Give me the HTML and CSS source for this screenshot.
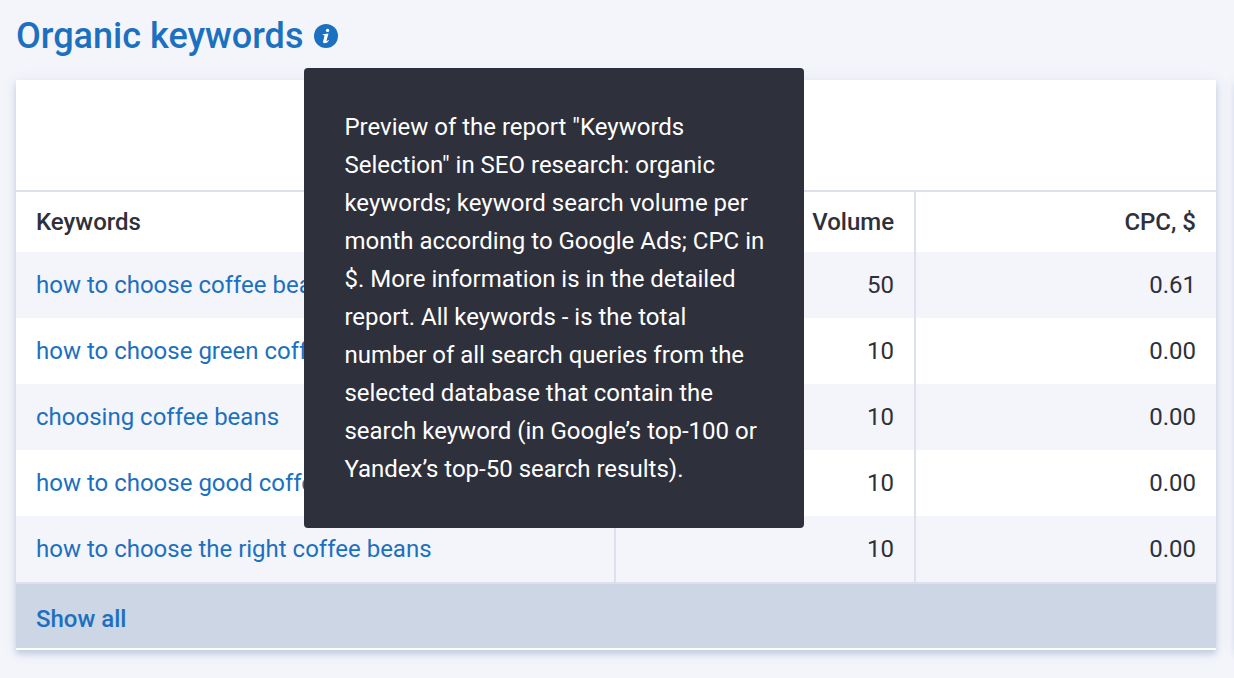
FILE: index.html
```
<!DOCTYPE html>
<html lang="en">
<head>
<meta charset="utf-8">
<title>Organic keywords</title>
<meta name="viewport" content="width=device-width, initial-scale=1">
<link rel="stylesheet" href="styles.css">
</head>
<body>
<main class="page">
  <header class="heading">
    <h2 class="heading-title">Organic keywords</h2>
    <div class="hint">
      <button class="hint-button" type="button" aria-label="About this report" aria-describedby="hint-text">
        <svg class="hint-icon" viewBox="0 0 24 24" aria-hidden="true">
          <circle cx="12" cy="12" r="12" fill="#1c70c0"/>
          <circle cx="13.6" cy="6.4" r="1.7" fill="#fff"/>
          <path d="M8.8 10.2 14.5 9.4 12.6 16.2Q12.4 17.2 13 17L14.6 16 14.9 16.7Q12.9 19.2 10.7 19.2 8.6 19.2 9.2 17L10.6 11.5 8.7 11.1Z" fill="#fff"/>
        </svg>
      </button>
      <div class="tooltip" id="hint-text" role="tooltip">Preview of the report "Keywords Selection" in SEO research: organic keywords; keyword search volume per month according to Google Ads; CPC in $. More information is in the detailed report. All keywords - is the total number of all search queries from the selected database that contain the search keyword (in Google’s top-100 or Yandex’s top-50 search results).</div>
    </div>
  </header>
  <div class="cards">
    <section class="card">
      <div class="card-summary"></div>
      <table class="keywords">
        <thead>
          <tr><th class="col-keyword" scope="col">Keywords</th><th class="number" scope="col">Volume</th><th class="number" scope="col">CPC, $</th></tr>
        </thead>
        <tbody>
          <tr><td><a class="link" href="#">how to choose coffee beans</a></td><td class="number">50</td><td class="number">0.61</td></tr>
          <tr><td><a class="link" href="#">how to choose green coffee</a></td><td class="number">10</td><td class="number">0.00</td></tr>
          <tr><td><a class="link" href="#">choosing coffee beans</a></td><td class="number">10</td><td class="number">0.00</td></tr>
          <tr><td><a class="link" href="#">how to choose good coffee</a></td><td class="number">10</td><td class="number">0.00</td></tr>
          <tr><td><a class="link" href="#">how to choose the right coffee beans</a></td><td class="number">10</td><td class="number">0.00</td></tr>
        </tbody>
      </table>
      <footer class="card-footer"><a class="link show-all" href="#">Show all</a></footer>
    </section>
    <section class="card card-next"></section>
  </div>
</main>
</body>
</html>
```
FILE: styles.css
```
* {
  box-sizing: border-box;
}

body {
  margin: 0;
  overflow-x: hidden;
  background: #f4f5fa;
  color: #2e303b;
  font-family: Roboto, "Liberation Sans", sans-serif;
  font-size: 24px;
  line-height: 38px;
}

.page {
  padding: 16px;
}

.heading {
  display: flex;
  align-items: center;
  gap: 11px;
  margin-bottom: 24px;
}

.heading-title {
  margin: 0;
  color: #1c70c0;
  font-size: 36px;
  font-weight: 500;
  line-height: 40px;
}

.hint {
  position: relative;
  display: flex;
}

.hint-button {
  display: block;
  padding: 0;
  border: 0;
  background: none;
  cursor: pointer;
}

.hint-icon {
  display: block;
  width: 24px;
  height: 24px;
}

.tooltip {
  position: absolute;
  top: 44px;
  left: -10px;
  z-index: 1;
  width: 500px;
  padding: 40px;
  border-radius: 4px;
  background: #2e303b;
  color: #fff;
}

.cards {
  display: flex;
  gap: 20px;
}

.card {
  flex: 1;
  padding-bottom: 2px;
  background: #fff;
  box-shadow: 0 4px 6px #c4cfe2, 0 2px 14px #dfe4ef;
}

.card-next {
  flex: 0 0 20px;
  margin-right: -38px;
}

.card-summary {
  height: 110px;
}

.keywords {
  width: 100%;
  border-collapse: separate;
  border-spacing: 0;
  border-top: 2px solid #dce1ed;
  border-bottom: 2px solid #dce1ed;
  table-layout: fixed;
}

.col-keyword {
  width: 50%;
}

.keywords th,
.keywords td {
  padding: 14px 20px;
  border-right: 2px solid #dce1ed;
  text-align: left;
}

.keywords th:last-child,
.keywords td:last-child {
  border-right: 0;
}

.keywords th {
  padding: 11px 20px;
  font-weight: 500;
}

.keywords .number {
  text-align: right;
}

.keywords tbody tr:nth-child(odd) {
  background: #f4f5fa;
}

.link {
  color: #1c70c0;
  text-decoration: none;
}

.card-footer {
  padding: 16px 20px 10px;
  background: #cdd6e5;
}

.show-all {
  font-weight: 500;
}
```
